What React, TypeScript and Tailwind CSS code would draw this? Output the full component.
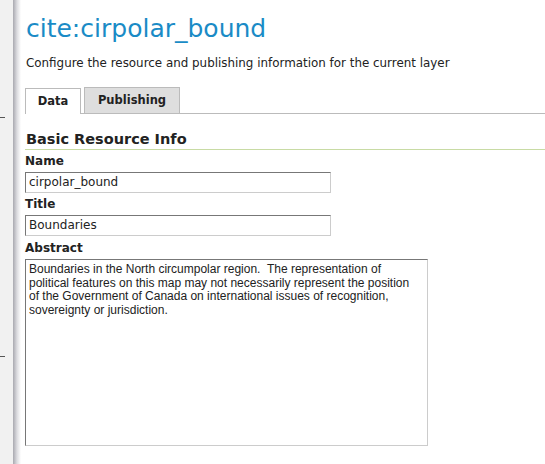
const abstractText =
  "Boundaries in the North circumpolar region.  The representation of political features on this map may not necessarily represent the position of the Government of Canada on international issues of recognition, sovereignty or jurisdiction.";

const Label = ({ children, className = "" }: { children: string; className?: string }) => (
  <label className={`block mt-[3px] mb-[2px] text-[12px] font-bold leading-[17px] text-[#222] ${className}`}>{children}</label>
);

const Field = ({ label, value }: { label: string; value: string }) => (
  <div className="flex flex-col">
    <Label>{label}</Label>
    <div className="w-[306px] h-[21px] border border-t-[#777] border-l-[#777] border-r-[#ccc] border-b-[#ccc] bg-white px-[3px] text-[12px] leading-[19px] text-[#222]">
      {value}
    </div>
  </div>
);

export default function App() {
  return (
    <div className="relative flex w-[545px] h-[464px] overflow-hidden bg-white font-['DejaVu_Sans',sans-serif]">
      {/* cut-off sidebar */}
      <div className="relative w-[13px] shrink-0 bg-[#f1f1f1]">
        <div className="absolute left-0 top-[117px] w-[5px] h-px bg-[#555]" />
        <div className="absolute left-0 top-[356px] w-[5px] h-px bg-[#555]" />
      </div>
      <div className="w-[8px] shrink-0 bg-gradient-to-r from-[#a9a9b0] via-[#dcdce0] to-white" />

      <div className="flex-1 pl-[4px] pt-[14px]">
        <h1 className="text-[25px] leading-[30px] text-[#1a8bc6] pl-[1px]">cite:cirpolar_bound</h1>
        <p className="mt-[12px] text-[11.9px] leading-[14px] text-[#222] pl-[1px]">
          Configure the resource and publishing information for the current layer
        </p>

        <div className="mt-[17px] flex items-end gap-[3px] border-b border-[#bbb]">
          <div className="h-[26px] w-[56px] border border-b-0 border-[#bbb] bg-white text-center text-[11.5px] font-bold leading-[25px] text-[#222] -mb-px pb-px">
            Data
          </div>
          <div className="h-[26px] w-[96px] border border-b-0 border-[#bbb] bg-[#dedede] text-center text-[11.5px] font-bold leading-[25px] text-[#222]">
            Publishing
          </div>
        </div>

        <h2 className="mt-[15px] pl-[1px] text-[14.5px] font-bold leading-[20px] text-[#222] border-b border-[#c8dba4]">
          Basic Resource Info
        </h2>

        <Field label="Name" value="cirpolar_bound" />
        <Field label="Title" value="Boundaries" />

        <Label className="!mt-[4px]">Abstract</Label>
        <div className="w-[403px] h-[187px] whitespace-pre-wrap border border-t-[#777] border-l-[#777] border-r-[#ccc] border-b-[#ccc] bg-white pl-[3px] pr-[12px] pt-[3px] font-['Liberation_Sans',Arial,sans-serif] text-[12px] leading-[13.7px] text-[#222]">
          {abstractText}
        </div>
      </div>
    </div>
  );
}
